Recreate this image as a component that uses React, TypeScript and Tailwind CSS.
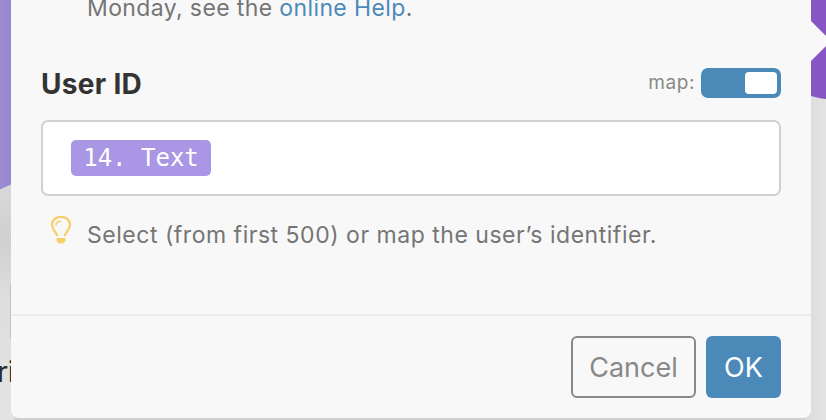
function Backdrop() {
  return (
    <svg className="absolute inset-0" width="826" height="420" viewBox="0 0 826 420">
      <defs>
        <linearGradient id="moduleLeft" x1="0" y1="0" x2="1" y2="0">
          <stop offset="0%" stopColor="#9c8ad2" />
          <stop offset="100%" stopColor="#9683cc" />
        </linearGradient>
        <linearGradient id="canvasRight" x1="0" y1="0" x2="1" y2="0">
          <stop offset="0%" stopColor="#dbdbdb" />
          <stop offset="100%" stopColor="#e3e3e3" />
        </linearGradient>
        <linearGradient id="canvasLeft" x1="0" y1="0" x2="0" y2="1">
          <stop offset="0%" stopColor="#dadada" />
          <stop offset="25%" stopColor="#d0d0d0" />
          <stop offset="50%" stopColor="#dedede" />
          <stop offset="100%" stopColor="#e3e3e3" />
        </linearGradient>
      </defs>
      <rect width="826" height="420" fill="#d0d0d0" />
      <rect y="180" width="14" height="240" fill="url(#canvasLeft)" />
      <rect x="805" width="21" height="420" fill="url(#canvasRight)" />
      <path d="M0 0H14V183L0 189.5Z" fill="url(#moduleLeft)" />
      <path d="M805 0H826V99Q818 98.500 805 94Z" fill="#8856c4" />
      <path d="M811 21L831 41L811 61Z" fill="#f8f8f8" />
      <rect x="10" y="285" width="2" height="53" fill="#c2c2c2" />
    </svg>
  );
}

function Bulb() {
  return (
    <svg className="mt-[19px] ml-[9px] shrink-0" width="22" height="30" viewBox="0 0 22 30" fill="none">
      <path
        d="M7.300 21C6.500 17.400 2 14.800 2 9.800C2 5 5.900 1.900 11 1.900C16.100 1.900 20 5 20 9.800C20 14.800 15.500 17.400 14.700 21"
        stroke="#f6cf6b"
        strokeWidth="2.300"
      />
      <path d="M6 10.400C6 8 7.800 6.300 11 6" stroke="#f6cf6b" strokeWidth="1.600" />
      <path d="M6.600 23H15.400V25.500Q15.400 27 13.800 27.500L13.300 28.600H8.700L8.200 27.500Q6.600 27 6.600 25.500Z" fill="#f6cf6b" />
    </svg>
  );
}

export default function App() {
  return (
    <div className="relative h-[420px] w-[826px] overflow-hidden font-['Inter','Liberation_Sans',sans-serif]">
      <Backdrop />
      <span className="absolute top-[354px] -left-[3px] text-[29px] leading-9 tracking-[-0.6px] text-[#2b2b2b]">ri</span>

      <div className="relative ml-[11px] flex h-[418px] w-[800px] flex-col rounded-b-lg bg-[#f8f8f8]">
        <div className="h-[314px] px-[30px]">
          <p className="-mt-2 ml-[46px] h-8 text-[23px] leading-8 tracking-[0.38px] whitespace-nowrap text-[#757575]">
            Monday, see the <a className="text-[#4b8ab8]">online Help</a>.
          </p>

          {/* Field header */}
          <div className="mt-[38px] flex h-[42px] items-center justify-between">
            <label className="pt-px text-[28px] font-bold tracking-[0.3px] text-[#333]">User ID</label>
            <div className="flex items-center gap-[6px]">
              <span className="text-[19px] tracking-[0.6px] text-[#888]">map:</span>
              <div className="flex h-[30px] w-20 items-center justify-end rounded-[7px] bg-[#4b8ab8] p-1">
                <div className="h-[22px] w-8 rounded-[4px] bg-white" />
              </div>
            </div>
          </div>

          <div className="mt-4 flex h-[76px] items-center rounded-[7px] border-2 border-[#d1d1d1] bg-white px-7">
            <span className="flex h-9 w-[140px] items-center justify-center rounded-[5px] bg-[#a996e4] font-['DejaVu_Sans_Mono',monospace] text-[24px] whitespace-pre text-white">
              14. Text
            </span>
          </div>

          {/* Hint */}
          <div className="flex">
            <Bulb />
            <p className="mt-[23px] ml-[15px] text-[23px] leading-8 tracking-[0.52px] whitespace-nowrap text-[#757575]">
              Select (from first 500) or map the user’s identifier.
            </p>
          </div>
        </div>

        <div className="flex flex-1 items-start justify-end gap-[10px] border-t-2 border-[#ececec] px-[30px] pt-5">
          <button className="h-[62px] w-[125px] rounded-[6px] border-2 border-[#888] pt-[2px] text-[27px] text-[#888]">
            Cancel
          </button>
          <button className="h-[62px] w-[75px] rounded-[6px] bg-[#4b8ab8] pt-[2px] text-[27px] text-white">OK</button>
        </div>
      </div>
    </div>
  );
}
